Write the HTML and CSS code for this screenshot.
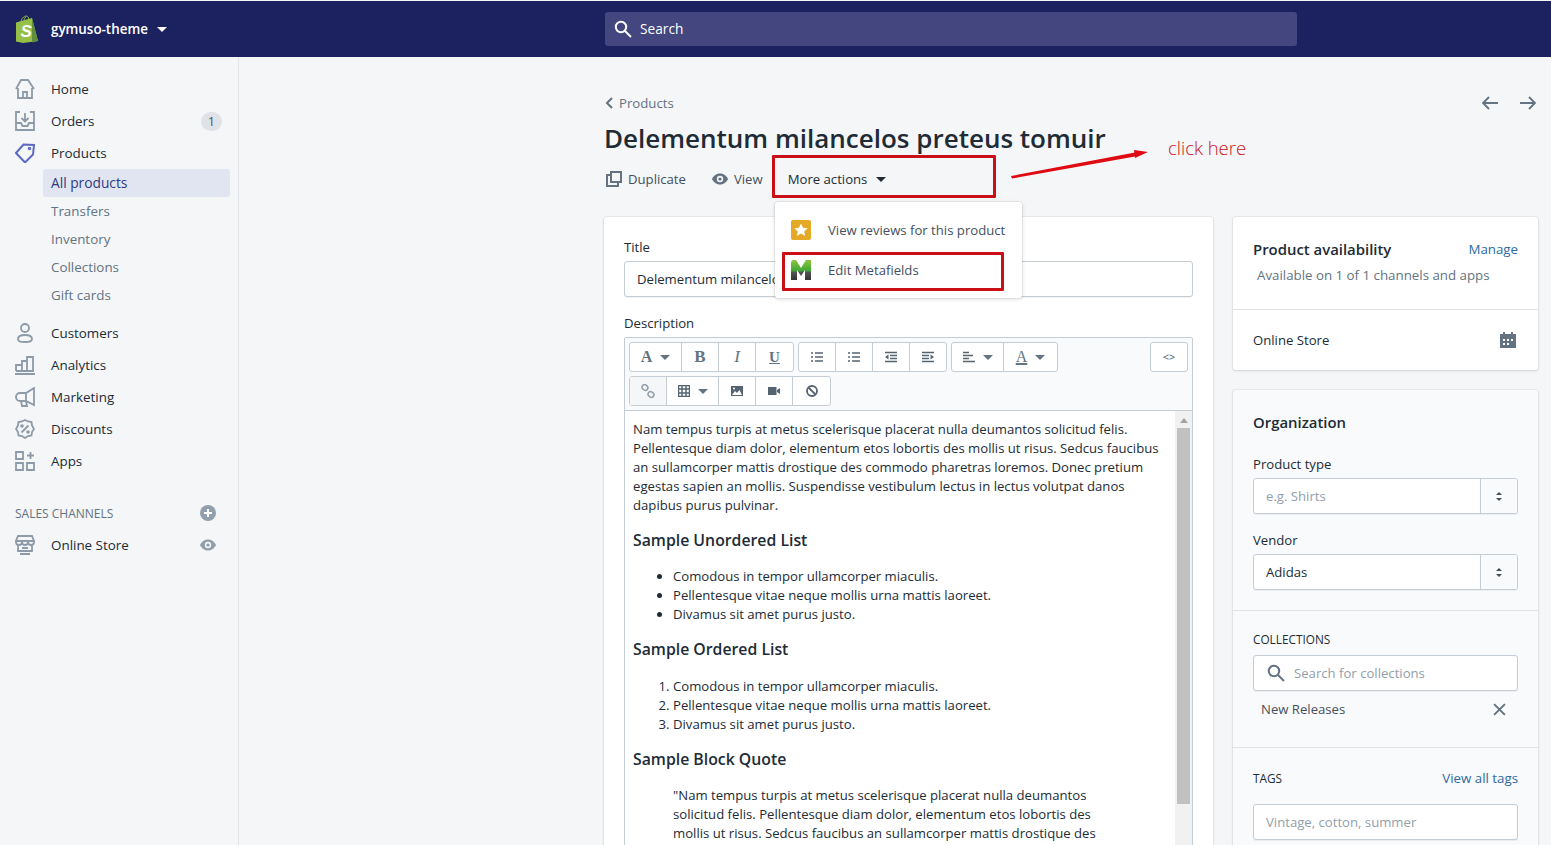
FILE: index.html
```html
<!DOCTYPE html>
<html lang="en">
<head>
<meta charset="utf-8">
<title>Delementum milancelos preteus tomuir</title>
<link rel="stylesheet" href="styles.css">
</head>
<body>
<header class="topbar">
  <div class="brand">
    <svg class="logo" viewBox="0 0 24 28"><path d="M1 7.500 17 3l6 23-15 2-7-1.500z" fill="#95bf47"/><path d="M17 3l6 23-6 1.500z" fill="#5e8e3e"/><path d="M6 7c0-3 3-6 5-6s3 2 3 5M9 6c0-2 1-4 2-4" fill="none" stroke="#95bf47" stroke-width="1"/><text x="5.500" y="22" class="logo-s">S</text></svg>
    <span class="brand-name">gymuso-theme</span>
    <span class="caret caret-white"></span>
  </div>
  <div class="search">
    <svg class="ic18" viewBox="0 0 18 18"><circle cx="7" cy="7" r="5.200" fill="none" stroke="#fff" stroke-width="2"/><path d="m11 11 6 6" stroke="#fff" stroke-width="2"/></svg>
    <span>Search</span>
  </div>
</header>
<div class="layout">
  <nav class="sidebar">
    <a class="nav-row"><svg class="nav-ic" viewBox="0 0 20 20"><path d="M1 10 6 1h7l6 9M3 9v10h14V9M8 19v-6h4v6" /></svg><span>Home</span></a>
    <a class="nav-row"><svg class="nav-ic" viewBox="0 0 20 20"><path d="M5 1H1v18h18V1h-4M1 12h5l1.500 3h5l1.500-3h5M10 2v8M6.500 7l3.500 3.500L13.500 7" /></svg><span>Orders</span><b class="badge">1</b></a>
    <a class="nav-row"><svg class="nav-ic nav-ic-active" viewBox="0 0 20 20"><path d="M1 10 8.500 1.500 19 2l-1 9.500-8 8z" /><circle cx="14.500" cy="5.500" r=".8"/></svg><span>Products</span></a>
    <div class="subnav">
      <a class="sub-row sub-active">All products</a>
      <a class="sub-row">Transfers</a>
      <a class="sub-row">Inventory</a>
      <a class="sub-row">Collections</a>
      <a class="sub-row">Gift cards</a>
    </div>
    <a class="nav-row"><svg class="nav-ic" viewBox="0 0 20 20"><circle cx="10" cy="5" r="4"/><path d="M3 16c0-3 3-4 7-4s7 1 7 4-3 3-7 3-7 0-7-3z"/></svg><span>Customers</span></a>
    <a class="nav-row"><svg class="nav-ic" viewBox="0 0 20 20"><path d="M1 16v-6h6v6M7 16V6h5v10M12 16V2h6v14zM1 16h17M0 19h20" /></svg><span>Analytics</span></a>
    <a class="nav-row"><svg class="nav-ic" viewBox="0 0 20 20"><path d="M19 1v17L11 14H5a4 4 0 0 1 0-8h6zM11 6v8M6 14l1 5h5l-1-5" /></svg><span>Marketing</span></a>
    <a class="nav-row"><svg class="nav-ic" viewBox="0 0 20 20"><path d="M10 1l3 1.500 3.500.500.500 3.500L19 10l-2 3-.500 3.500-3.500.500-3 2-3-2-3.500-.500L3 13l-2-3 2-3.500.500-3.500L7 2.500zM6.500 13.500l7-7"/><circle cx="7" cy="7" r=".9"/><circle cx="13" cy="13" r=".9"/></svg><span>Discounts</span></a>
    <a class="nav-row"><svg class="nav-ic" viewBox="0 0 20 20"><path d="M1 1h7v7H1zM1 12h7v7H1zM12 12h7v7h-7zM15.500 1v7M12 4.500h7" /></svg><span>Apps</span></a>
    <div class="section-row"><span class="section-label">SALES CHANNELS</span><svg class="ic16" viewBox="0 0 16 16"><circle cx="8" cy="8" r="8" fill="#919eab"/><path d="M8 4v8M4 8h8" stroke="#fff" stroke-width="2"/></svg></div>
    <a class="nav-row nav-row-eye"><svg class="nav-ic" viewBox="0 0 20 20"><path d="M3 1h14l2 5H1zM1 6v1a3 3 0 0 0 6 0 3 3 0 0 0 6 0 3 3 0 0 0 6 0V6M3 10v6h14v-6M7 13h6M5 19h10" /></svg><span>Online Store</span><svg class="ic16 eye-end" viewBox="0 0 16 16"><path d="M0 8c2-4 5-5.500 8-5.500S14 4 16 8c-2 4-5 5.500-8 5.500S2 12 0 8z" fill="#919eab"/><circle cx="8" cy="8" r="3.200" fill="#f4f6f8"/><circle cx="8" cy="8" r="1.600" fill="#919eab"/></svg></a>
  </nav>
  <main class="page">
    <div class="crumb-row">
      <a class="crumb"><svg class="chev" viewBox="0 0 8 12"><path d="M7 1 2 6l5 5" /></svg><span>Products</span></a>
      <div class="pager">
        <svg class="pager-ic" viewBox="0 0 16 14"><path d="M7 1 1 7l6 6M1 7h15" /></svg>
        <svg class="pager-ic" viewBox="0 0 16 14"><path d="m9 1 6 6-6 6M15 7H0" /></svg>
      </div>
    </div>
    <h1 class="title">Delementum milancelos preteus tomuir</h1>
    <div class="actions">
      <a class="action action-dup"><svg class="ic16" viewBox="0 0 16 16"><path class="dup" d="M5 1h10v10H5zM5 4H1v11h11v-4" /></svg><span>Duplicate</span></a>
      <a class="action action-view"><svg class="ic16" viewBox="0 0 16 16"><path d="M0 8c2-4 5-5.500 8-5.500S14 4 16 8c-2 4-5 5.500-8 5.500S2 12 0 8z" fill="#637381"/><circle cx="8" cy="8" r="3.200" fill="#f4f6f8"/><circle cx="8" cy="8" r="1.600" fill="#637381"/></svg><span>View</span></a>
      <a class="action action-more"><span>More actions</span><span class="caret caret-dark"></span></a>
    </div>
    <div class="columns">
      <section class="card card-main">
        <label class="label">Title</label>
        <div class="input input-value">Delementum milancelos preteus tomuir</div>
        <label class="label label-gap">Description</label>
        <div class="editor">
          <div class="toolbar">
            <div class="tool-row">
              <div class="tool-group">
                <span class="tool tool-wide serif tool-font">A<i class="caret caret-grey"></i></span>
                <span class="tool serif tool-b">B</span>
                <span class="tool serif tool-i">I</span>
                <span class="tool serif tool-u">U</span>
              </div>
              <div class="tool-group tool-group-lists">
                <span class="tool"><svg class="ti" viewBox="0 0 12 12"><path d="M0 2h2M4 2h8M0 6h2M4 6h8M0 10h2M4 10h8"/></svg></span>
                <span class="tool"><svg class="ti" viewBox="0 0 12 12"><path d="M0 2h2M4 2h8M0 6h2M4 6h8M0 10h2M4 10h8" /></svg></span>
                <span class="tool"><svg class="ti" viewBox="0 0 12 12"><path d="M0 1.500h12M5 4.500h7M5 7.500h7M0 10.500h12"/><path class="fill" d="M3.500 3.500v5L0 6z"/></svg></span>
                <span class="tool"><svg class="ti" viewBox="0 0 12 12"><path d="M0 1.500h12M0 4.500h7M0 7.500h7M0 10.500h12" /><path class="fill" d="M8.500 3.500v5L12 6z"/></svg></span>
              </div>
              <div class="tool-group">
                <span class="tool tool-wide"><svg class="ti" viewBox="0 0 12 12"><path d="M0 1.500h6M0 4.500h10M0 7.500h6M0 10.500h12"/></svg><i class="caret caret-grey"></i></span>
                <span class="tool tool-color serif">A<i class="caret caret-grey"></i></span>
              </div>
              <div class="tool-group tool-end"><span class="tool tool-code">&lt;&gt;</span></div>
            </div>
            <div class="tool-row">
              <div class="tool-group">
                <span class="tool tool-off"><svg class="ti ti-link" viewBox="0 0 14 14"><rect x="1" y="1" width="6" height="5" rx="2.500" transform="rotate(40 4 3.500)"/><rect x="7" y="8" width="6" height="5" rx="2.500" transform="rotate(40 10 10.500)"/></svg></span>
                <span class="tool tool-wide"><svg class="ti" viewBox="0 0 12 12"><path d="M.5.500h11v11H.5zM.5 4h11M.5 8h11M4 .500v11M8 .500v11"/></svg><i class="caret caret-grey"></i></span>
                <span class="tool"><svg class="ti" viewBox="0 0 12 12"><path class="fill" d="M0 1h12v10H0z"/><path class="hole" d="m1 10 3-4 2 2 2.500-3L11 10z"/><circle class="hole" cx="3" cy="3.500" r="1"/></svg></span>
                <span class="tool"><svg class="ti" viewBox="0 0 12 12"><path class="fill" d="M0 2h8.500v8H0zM9 5l3-2v6L9 7z"/></svg></span>
                <span class="tool"><svg class="ti ti-block" viewBox="0 0 12 12"><circle cx="6" cy="6" r="5"/><path d="m2.500 2.500 7 7"/></svg></span>
              </div>
            </div>
          </div>
          <div class="editor-body">
            <div class="rte">
              <p>Nam tempus turpis at metus scelerisque placerat nulla deumantos solicitud felis.<br>Pellentesque diam dolor, elementum etos lobortis des mollis ut risus. Sedcus faucibus<br>an sullamcorper mattis drostique des commodo pharetras loremos. Donec pretium<br>egestas sapien an mollis. Suspendisse vestibulum lectus in lectus volutpat danos<br>dapibus purus pulvinar.</p>
              <h4>Sample Unordered List</h4>
              <ul><li>Comodous in tempor ullamcorper miaculis.</li><li>Pellentesque vitae neque mollis urna mattis laoreet.</li><li>Divamus sit amet purus justo.</li></ul>
              <h4>Sample Ordered List</h4>
              <ol><li>Comodous in tempor ullamcorper miaculis.</li><li>Pellentesque vitae neque mollis urna mattis laoreet.</li><li>Divamus sit amet purus justo.</li></ol>
              <h4>Sample Block Quote</h4>
              <blockquote>"Nam tempus turpis at metus scelerisque placerat nulla deumantos<br>solicitud felis. Pellentesque diam dolor, elementum etos lobortis des<br>mollis ut risus. Sedcus faucibus an sullamcorper mattis drostique des</blockquote>
            </div>
            <div class="scrollbar"><span class="scroll-up"></span><span class="scroll-thumb"></span></div>
          </div>
        </div>
      </section>
      <aside class="side">
        <section class="card">
          <div class="sec sec-avail">
            <div class="sec-head"><h2 class="card-title">Product availability</h2><a class="link">Manage</a></div>
            <p class="avail">Available on 1 of 1 channels and apps</p>
          </div>
          <div class="sec-store"><span>Online Store</span><svg class="ic16" viewBox="0 0 16 16"><path fill="#637381" d="M0 2h3V0h2v2h6V0h2v2h3v14H0z"/><path fill="#fff" d="M3 7h2v2H3zM7 7h2v2H7zM11 7h2v2h-2zM3 11h2v2H3zM7 11h2v2H7z"/></svg></div>
        </section>
        <section class="card card-tint">
          <div class="sec sec-org">
            <h2 class="card-title">Organization</h2>
            <label class="label label-type">Product type</label>
            <div class="input select"><span class="ph">e.g. Shirts</span><span class="stepper"><i class="up"></i><i class="down"></i></span></div>
            <label class="label label-gap">Vendor</label>
            <div class="input select"><span>Adidas</span><span class="stepper"><i class="up"></i><i class="down"></i></span></div>
          </div>
          <div class="sec sec-coll">
            <div class="caps">COLLECTIONS</div>
            <div class="input input-search"><svg class="ic18" viewBox="0 0 18 18"><circle cx="7" cy="7" r="5.200" fill="none" stroke="#637381" stroke-width="2"/><path d="m11 11 6 6" stroke="#637381" stroke-width="2"/></svg><span class="ph">Search for collections</span></div>
            <div class="chosen"><span>New Releases</span><svg class="x" viewBox="0 0 12 12"><path d="m1 1 10 10M11 1 1 11"/></svg></div>
          </div>
          <div class="sec sec-tags">
            <div class="sec-head"><div class="caps">TAGS</div><a class="link">View all tags</a></div>
            <div class="input input-tags"><span class="ph">Vintage, cotton, summer</span></div>
          </div>
        </section>
      </aside>
    </div>
  </main>
</div>

<div class="menu">
  <div class="menu-item"><svg class="menu-ic" viewBox="0 0 20 20"><rect width="20" height="20" rx="2" fill="#e4a925"/><path d="m10 3.500 2 4.300 4.700.500-3.500 3.100 1 4.600-4.200-2.400-4.200 2.400 1-4.600-3.500-3.100 4.700-.500z" fill="#fff"/></svg><span>View reviews for this product</span></div>
  <div class="menu-item"><svg class="menu-ic" viewBox="0 0 20 20"><defs><linearGradient id="mg" x1="0" y1="0" x2="0" y2="1"><stop offset="0" stop-color="#8cc63f"/><stop offset=".55" stop-color="#3fa535"/><stop offset=".6" stop-color="#555"/><stop offset="1" stop-color="#333"/></linearGradient></defs><path d="M0 20V3q0-3 3-3h2l5 8 5-8h5v20h-6V10l-4 6-4-6v10z" fill="url(#mg)"/></svg><span>Edit Metafields</span></div>
</div>
<div class="mark mark-more"></div>
<div class="mark mark-meta"></div>
<svg class="arrow" viewBox="0 0 140 30"><path d="M1 26 125 2.500v4L2 28.500z" fill="#e00b12"/><path d="m138 2-14-2 1 8z" fill="#e00b12"/></svg>
<div class="note">click here</div>
</body>
</html>
```

FILE: styles.css
```css
* { box-sizing: border-box; }
html, body { margin: 0; height: 100%; }
body {
  height: 845px;
  overflow: hidden;
  background: #f4f6f8;
  color: #212b36;
  font-family: "Open Sans", "Noto Sans", sans-serif;
  font-size: 13.150px;
  line-height: 20px;
  position: relative;
}
p, h1, h2, h4, ul, ol, blockquote { margin: 0; padding: 0; }
a { color: inherit; text-decoration: none; }
i { font-style: normal; }
label { display: block; }

.ic16 { width: 16px; height: 16px; flex: none; display: block; }
.ic18 { width: 18px; height: 18px; flex: none; display: block; }

.caret { display: inline-block; width: 0; height: 0; border-left: 5px solid transparent; border-right: 5px solid transparent; border-top: 5px solid; }
.caret-white { color: #fff; }
.caret-dark { color: #212b36; }
.caret-grey { color: #637381; margin-left: 8px; }

/* top bar */
.topbar {
  height: 57px;
  background: #1c2260;
  border-top: 1px solid #f4f6f8;
  display: flex;
  align-items: center;
  color: #fff;
}
.brand { width: 605px; padding-left: 15px; display: flex; align-items: center; flex: none; }
.logo { width: 24px; height: 28px; margin-right: 12px; }
.logo-s { font: italic 700 17px "Liberation Sans", sans-serif; fill: #fff; }
.brand-name { font-weight: 600; font-size: 13.400px; margin-right: 9px; }
.search {
  width: 692px;
  height: 34px;
  background: #43467f;
  border-radius: 3px;
  display: flex;
  align-items: center;
  gap: 8px;
  padding-left: 9px;
  font-size: 13.700px;
  font-weight: 500;
}

.layout { display: flex; height: 788px; overflow: hidden; }

/* sidebar */
.sidebar {
  width: 239px;
  flex: none;
  border-right: 1px solid #e3e6e9;
  padding-top: 16px;
  color: #212b36;
}
.nav-row {
  height: 32px;
  display: flex;
  align-items: center;
  padding: 0 16px 0 15px;
  font-weight: 500;
  font-size: 13.400px;
}
.nav-ic {
  width: 20px;
  height: 20px;
  margin-right: 16px;
  flex: none;
  fill: none;
  stroke: #8d9aa8;
  stroke-width: 1.800;
}
.nav-ic-active { stroke: #5c6ac4; stroke-width: 2; }
.badge {
  margin-left: auto;
  width: 21px;
  height: 19px;
  border-radius: 10px;
  background: #dfe3e8;
  color: #454f5b;
  font-weight: 400;
  font-size: 12px;
  line-height: 20px;
  text-align: center;
}
.subnav { margin: 0 8px 8px 43px; }
.sub-row {
  display: block;
  height: 28px;
  line-height: 28px;
  padding-left: 8px;
  border-radius: 3px;
  color: #637381;
  font-size: 13.400px;
}
.sub-active { background: #e1e5f2; color: #2f3a85; font-weight: 500; font-size: 13.750px; }
.section-row {
  margin-top: 20px;
  height: 32px;
  display: flex;
  align-items: center;
  justify-content: space-between;
  padding: 0 22px 0 15px;
  color: #637381;
  font-size: 12px;
}
.section-label { padding-top: 2px; }
.nav-row-eye { padding-right: 22px; }
.eye-end { margin-left: auto; }

/* page */
.page { flex: 1; padding: 36px 13px 0 365px; min-width: 0; }
.crumb-row { display: flex; justify-content: space-between; align-items: center; height: 20px; }
.crumb { display: flex; align-items: center; color: #637381; font-size: 13.200px; }
.chev { width: 8px; height: 12px; margin: 0 6px 0 1px; fill: none; stroke: #637381; stroke-width: 2; }
.pager { display: flex; gap: 22px; margin-right: 2px; }
.pager-ic { width: 16px; height: 14px; display: block; fill: none; stroke: #637381; stroke-width: 1.800; }
.title { margin-top: 7px; font-size: 26px; line-height: 36px; font-weight: 600; color: #212b36; white-space: nowrap; }
.actions { margin-top: 13px; height: 20px; display: flex; align-items: center; color: #454f5b; font-size: 13.150px; }
.action { display: flex; align-items: center; }
.action-dup { margin-left: 2px; gap: 6px; }
.dup { fill: none; stroke: #637381; stroke-width: 2; }
.action-view { margin-left: 26px; gap: 6px; }
.action-more { margin-left: 25px; gap: 9px; color: #212b36; }

.columns { margin-top: 28px; display: grid; grid-template-columns: 609px 305px; gap: 20px; align-items: start; }
.card {
  background: #fff;
  border-radius: 3px;
  box-shadow: 0 0 0 1px rgba(63,63,68,.05), 0 1px 3px rgba(63,63,68,.15);
}
.card-tint { background: #f9fafb; }
.card-main { padding: 20px; height: 800px; }
.side { display: flex; flex-direction: column; gap: 20px; }
.label { display: block; height: 20px; margin-bottom: 4px; }
.label-gap { margin-top: 16px; }
.input {
  height: 36px;
  background: #fff;
  border: 1px solid #c4cdd5;
  border-radius: 3px;
  padding: 0 12px;
  display: flex;
  align-items: center;
  box-shadow: 0 1px 0 rgba(22,29,37,.05);
  white-space: nowrap;
  overflow: hidden;
}
.ph { color: #919eab; }

/* editor */
.editor { border: 1px solid #c4cdd5; border-radius: 2px 2px 0 0; height: 520px; overflow: hidden; }
.toolbar {
  background: #f9fafb;
  border-bottom: 1px solid #c4cdd5;
  padding: 4px;
  display: flex;
  flex-direction: column;
  gap: 4px;
  height: 73px;
}
.tool-row { display: flex; gap: 4px; height: 30px; }
.tool-group { display: flex; border: 1px solid #c4cdd5; border-radius: 3px; background: #fff; }
.tool-end { margin-left: auto; margin-right: 0; }
.tool {
  width: 37px;
  display: flex;
  align-items: center;
  justify-content: center;
  border-right: 1px solid #c4cdd5;
  color: #637381;
}
.tool:last-child { border-right: 0; }
.tool-group-lists .tool:last-child { width: 36px; }
.tool-wide { width: 52px; }
.tool-color { width: 53px; font-size: 14px; text-decoration: underline; text-decoration-thickness: 2px; }
.tool-off { background: #f4f6f8; }
.serif { font-family: "Liberation Serif", serif; font-size: 16px; }
.tool-font { font-weight: 700; }
.tool-b { font-weight: 700; font-size: 17px; }
.tool-i { font-style: italic; font-size: 17px; }
.tool-u { font-weight: 700; text-decoration: underline; font-size: 15px; }
.tool-code { width: 36px; font-size: 11px; font-weight: 600; }
.ti { width: 12px; height: 12px; display: block; fill: none; stroke: #566472; stroke-width: 1.500; }
.ti .fill { fill: #566472; stroke: none; }
.ti .hole { fill: #fff; stroke: none; }
.ti-link { width: 14px; height: 14px; stroke: #919eab; stroke-width: 1.500; }
.ti-block { stroke-width: 1.800; }
.editor-body { display: flex; background: #fff; height: 445px; }
.rte { flex: 1; padding: 9px 0 0 8px; line-height: 19px; white-space: nowrap; min-width: 0; }
.rte h4 { font-size: 15.800px; font-weight: 600; margin: 16px 0 17px; line-height: 19px; }
.rte ul, .rte ol { padding-left: 40px; }
.rte h4 + ol { margin-top: 18px; }
.rte blockquote { padding-left: 40px; }
.scrollbar { width: 17px; background: #f1f1f1; position: relative; display: flex; flex-direction: column; align-items: center; }
.scroll-up { margin-top: 7px; width: 0; height: 0; border: 4px solid transparent; border-top: 0; border-bottom: 5px solid #a3a3a3; }
.scroll-thumb { margin-top: 5px; width: 13px; height: 376px; background: #c1c1c1; }

/* right column */
.sec { padding: 21px 20px 20px; border-bottom: 1px solid #dfe3e8; }
.sec:last-child { border-bottom: 0; }
.sec-avail { padding-bottom: 24px; height: 93px; }
.sec-head { display: flex; justify-content: space-between; align-items: center; }
.card-title { font-size: 14.900px; line-height: 22px; font-weight: 600; color: #212b36; }
.link { color: #2d6a9f; font-size: 13.300px; }
.avail { margin: 5px 0 0 4px; color: #637381; font-size: 13.300px; }
.sec-store { height: 60px; padding: 0 22px 0 20px; display: flex; align-items: center; justify-content: space-between; }
.label-type { margin-top: 21px; }
.select { padding-right: 0; justify-content: space-between; }
.stepper { width: 37px; height: 100%; flex: none; background: #f9fafb; border-left: 1px solid #c4cdd5; display: flex; flex-direction: column; align-items: center; justify-content: center; gap: 3px; }
.up { border: 3px solid transparent; border-top: 0; border-bottom: 3.500px solid #454f5b; }
.down { border: 3px solid transparent; border-bottom: 0; border-top: 3.500px solid #454f5b; }
.sec-coll { padding: 18px 20px 28px; }
.caps { font-size: 11.800px; font-weight: 500; color: #212b36; }
.sec-coll .caps { margin-bottom: 6px; }
.input-search { gap: 9px; padding-left: 13px; }
.chosen { margin-top: 8px; padding: 0 12px 0 8px; height: 20px; display: flex; align-items: center; justify-content: space-between; color: #454f5b; }
.x { width: 13px; height: 13px; fill: none; stroke: #637381; stroke-width: 1.800; display: block; }
.sec-tags { padding-top: 20px; }
.input-tags { margin-top: 16px; }

/* overlays */
.menu {
  position: absolute;
  left: 775px;
  top: 202px;
  width: 247px;
  height: 96px;
  padding-top: 8px;
  background: #fff;
  border-radius: 3px;
  box-shadow: 0 0 0 1px rgba(63,63,68,.06), 0 1px 4px rgba(63,63,68,.2);
  color: #454f5b;
}
.menu-item { height: 40px; padding-left: 16px; display: flex; align-items: center; gap: 17px; white-space: nowrap; }
.menu-ic { width: 20px; height: 20px; flex: none; display: block; }
.mark { position: absolute; border: 3px solid #cb0f17; border-radius: 1px; }
.mark-more { left: 772px; top: 155px; width: 224px; height: 43px; }
.mark-meta { left: 782px; top: 252px; width: 222px; height: 39px; }
.arrow { position: absolute; left: 1010px; top: 150px; width: 140px; height: 30px; overflow: visible; }
.note { position: absolute; left: 1168px; top: 135px; color: #c8141c; font-size: 18.500px; font-weight: 300; line-height: 26px; white-space: nowrap; }
```
